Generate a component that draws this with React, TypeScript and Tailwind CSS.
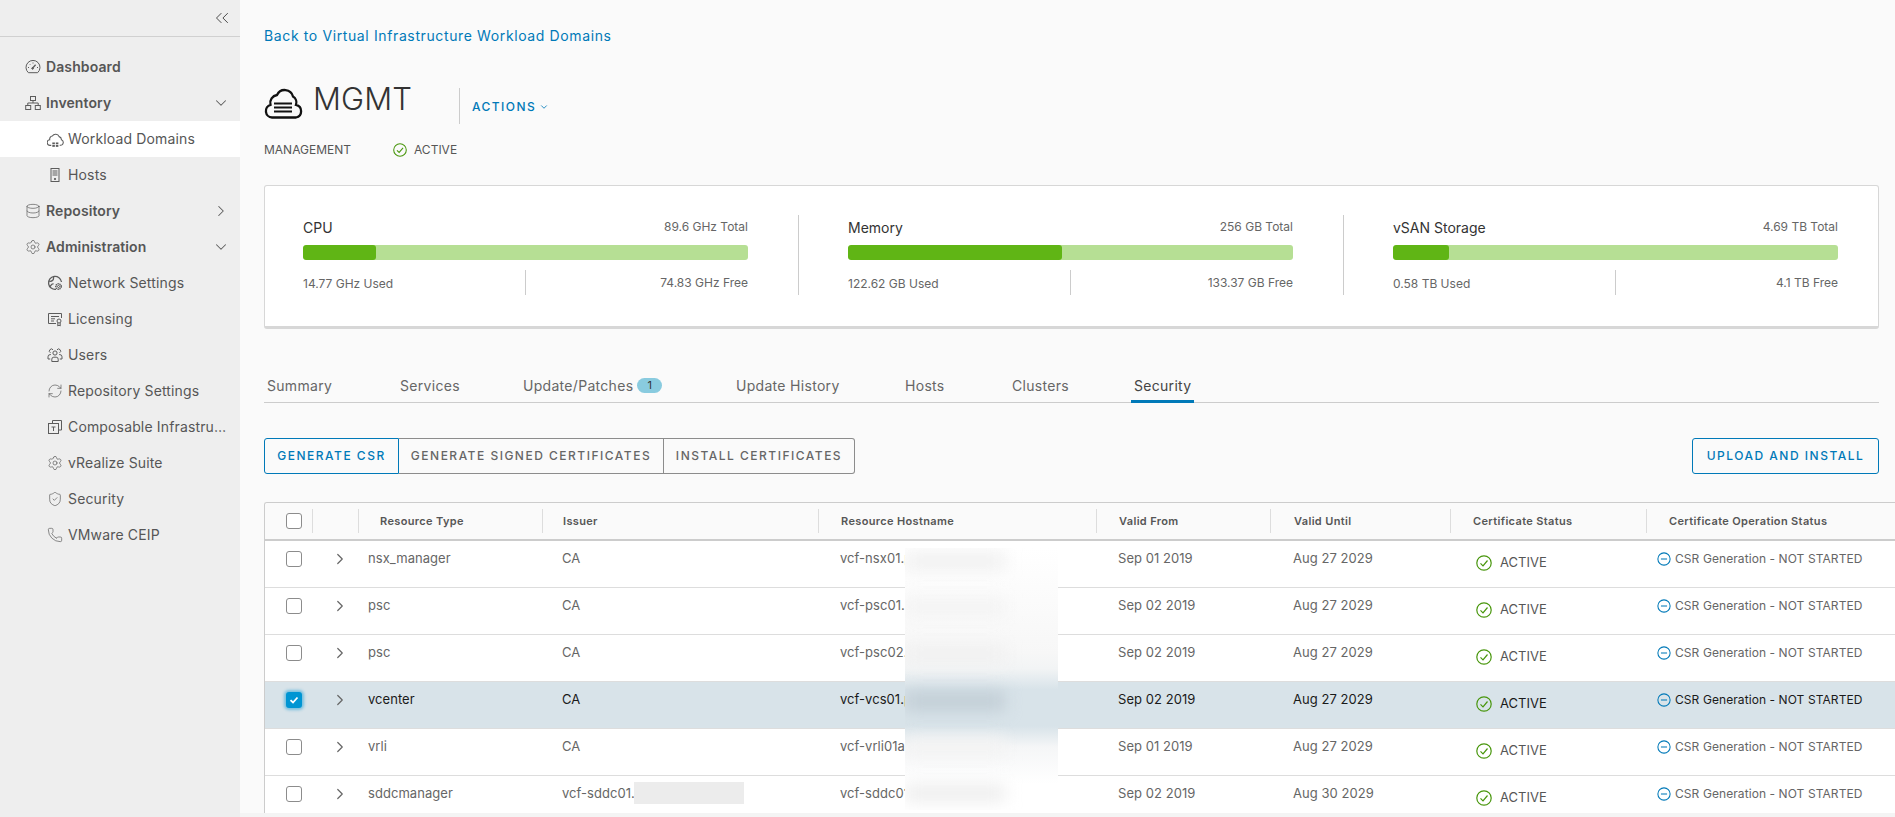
import React from "react";
import { ChevronDown, ChevronRight, ChevronsLeft, Database, Phone, RefreshCw, Settings, ShieldCheck } from "lucide-react";

const INK = "#5c5c5c";
const G = ({ children, cls = "w-[16px] h-[16px]" }: { children: React.ReactNode; cls?: string }) => (
  <svg viewBox="0 0 16 16" fill="none" stroke={INK} strokeWidth="1" className={cls + " shrink-0"}>
    {children}
  </svg>
);

const GaugeIcon = () => (
  <G>
    <path d="M3.400 13.700h9.200a7 7 0 1 0-9.200 0Z" />
    <path d="M3 8.500h1M12 8.500h1M8 3.500v1M4.800 5.200l.6.6" />
    <path d="M7 9.700l3.600-3.900" strokeWidth="1.300" />
    <circle cx="7.600" cy="9.400" r="0.800" fill={INK} />
  </G>
);
const InventoryIcon = () => (
  <G>
    <rect x="5.500" y="1.500" width="5" height="4" />
    <path d="M8 5.500V8M2.800 10.500V8H13.200V10.500" />
    <rect x="0.700" y="10.500" width="5" height="4" />
    <rect x="10.300" y="10.500" width="5" height="4" />
  </G>
);
const CloudIcon = () => (
  <G cls="w-[17px] h-[17px]">
    <path d="M4 13.500H3a2.600 2.600 0 0 1-.4-5.200A2.900 2.900 0 0 1 5 4.700a3.600 3.600 0 0 1 6.400.6 3 3 0 0 1 2.200 3 2.700 2.700 0 0 1-1 5.200H12" />
    <rect x="5" y="10.800" width="2.400" height="1.700" fill={INK} stroke="none" />
    <rect x="8.300" y="10.800" width="2.400" height="1.700" fill={INK} stroke="none" />
    <rect x="5" y="13.200" width="2.400" height="1.700" fill={INK} stroke="none" />
    <rect x="8.300" y="13.200" width="2.400" height="1.700" fill={INK} stroke="none" />
  </G>
);
const HostIcon = () => (
  <G>
    <rect x="4" y="1.500" width="8" height="13" />
    <path d="M5.500 4h5M5.500 6h5M5.500 8h5" />
    <circle cx="8" cy="12" r="0.700" fill={INK} />
  </G>
);
const NetIcon = () => (
  <G>
    <path d="M9 14.300A6.500 6.500 0 1 1 14.500 7" strokeWidth="1.300" />
    <path d="M2 6c2 1 3 0 4-1s0-2.500 1-3.500M3 11.500c1-1 1.500-3 3.500-2.500" strokeWidth="1.300" />
    <circle cx="11.500" cy="11.500" r="2.700" strokeWidth="1.500" strokeDasharray="1.300 .6" />
    <circle cx="11.500" cy="11.500" r="1" />
  </G>
);
const LicenseIcon = () => (
  <G>
    <path d="M9 12.500H1.500V2.500H14.500V7" />
    <path d="M4 5.500H12M4 7.800H8M4 10H7" />
    <circle cx="12" cy="10" r="2" />
    <path d="M10.800 11.800V15L12 14l1.200 1v-3.200" />
  </G>
);
const UsersIcon = () => (
  <G>
    <circle cx="8" cy="6" r="2.100" />
    <path d="M4.800 14.500v-2.300a2 2 0 0 1 2-2h2.400a2 2 0 0 1 2 2v2.300Z" />
    <path d="M6 2.800a2 2 0 1 0-2.500 3M10 2.800a2 2 0 1 1 2.500 3" />
    <path d="M3.200 12H1v-2.200A2.200 2.200 0 0 1 3.200 7.600H4M12.800 12H15V9.800a2.200 2.200 0 0 0-2.200-2.200H12" />
  </G>
);
const ComposeIcon = () => (
  <G>
    <path d="M5.500 4.500V1.500H14.500V11H11.500" />
    <rect x="1.500" y="4.500" width="10" height="10" />
    <path d="M4.500 8h4M6.500 8v4" />
  </G>
);

const Top = ({ icon, label, chev }: { icon: React.ReactNode; label: string; chev?: "d" | "r" }) => (
  <div className="h-9 flex items-center pl-[25px] pr-[10px] gap-[5px]">
    {icon}
    <span className="font-semibold text-[14px] tracking-[0.1px] text-[#565656] flex-1 pb-[1px]">{label}</span>
    {chev === "d" && <ChevronDown size={18} strokeWidth={1.400} color="#5c5c5c" />}
    {chev === "r" && <ChevronRight size={18} strokeWidth={1.400} color="#5c5c5c" />}
  </div>
);
const Sub = ({ icon, label, active }: { icon: React.ReactNode; label: string; active?: boolean }) => (
  <div className={"h-9 flex items-center pl-[47px] gap-[5px] text-[14px] tracking-[0.15px] text-[#565656] " + (active ? "bg-white" : "")}>
    <span className="w-[16px] flex justify-center">{icon}</span>
    <span className="whitespace-nowrap pb-[1px]">{label}</span>
  </div>
);
const L = { size: 16, strokeWidth: 1.050, color: INK, className: "shrink-0" };

const Sidebar = () => (
  <aside className="w-[240px] shrink-0 bg-[#eeeeee] h-[817px]">
    <div className="h-[37px] border-b border-[#d0d0d0] flex items-center justify-end pr-[7px]">
      <ChevronsLeft size={22} strokeWidth={1.050} color="#444" />
    </div>
    <div className="pt-3">
      <Top icon={<GaugeIcon />} label="Dashboard" />
      <Top icon={<InventoryIcon />} label="Inventory" chev="d" />
      <Sub icon={<CloudIcon />} label="Workload Domains" active />
      <Sub icon={<HostIcon />} label="Hosts" />
      <Top icon={<Database {...L} />} label="Repository" chev="r" />
      <Top icon={<Settings {...L} />} label="Administration" chev="d" />
      <Sub icon={<NetIcon />} label="Network Settings" />
      <Sub icon={<LicenseIcon />} label="Licensing" />
      <Sub icon={<UsersIcon />} label="Users" />
      <Sub icon={<RefreshCw {...L} />} label="Repository Settings" />
      <Sub icon={<ComposeIcon />} label="Composable Infrastru…" />
      <Sub icon={<Settings {...L} />} label="vRealize Suite" />
      <Sub icon={<ShieldCheck {...L} />} label="Security" />
      <Sub icon={<Phone {...L} />} label="VMware CEIP" />
    </div>
  </aside>
);

const CheckCircle = ({ cls }: { cls: string }) => (
  <svg viewBox="0 0 16 16" fill="none" className={cls + " shrink-0"} stroke="#48960c" strokeWidth="1.200">
    <circle cx="8" cy="8" r="7.200" />
    <path d="M4.500 8.300l2.500 2.500 4.500-5.300" />
  </svg>
);

const Meter = ({ title, total, used, free, pct }: { title: string; total: string; used: string; free: string; pct: number }) => (
  <div className="flex w-[445px] shrink-0 flex-col">
    <div className="flex items-center justify-between h-[24px]">
      <span className="text-[14px] text-[#333333]">{title}</span>
      <span className="text-[12px] text-[#666666]">{total}</span>
    </div>
    <div className="mt-[6px] h-[15px] rounded-[3px] bg-[#b6df94] overflow-hidden">
      <div className="h-full rounded-[3px] bg-[#60b515]" style={{ width: pct + "%" }} />
    </div>
    <div className="mt-[10px] flex h-[25px] items-center">
      <span className="w-[223px] text-[12px] text-[#666666] h-full flex items-center border-r border-[#cccccc] pt-[2px]">{used}</span>
      <span className="flex-1 text-right text-[12px] text-[#666666]">{free}</span>
    </div>
  </div>
);

const Tab = ({ label, w, active, badge }: { label: string; w: string; active?: boolean; badge?: boolean }) => (
  <div className={"h-[38px] flex text-[14px] tracking-[0.3px] text-[#666666] " + w}>
    <span className={"h-full flex items-center border-b-[3px] px-[3px] pt-[5px] " + (active ? "border-[#0079b8] text-[#444444]" : "border-transparent")}>
      {label}
      {badge && (
        <span className="ml-[4px] w-[25px] h-[15px] tracking-normal rounded-full bg-[#89cbdf] text-[11px] text-[#333333] flex items-center justify-center">1</span>
      )}
    </span>
  </div>
);

const cols = "grid grid-cols-[47px_46px_184px_276px_278px_174px_180px_196px_249px]";
const Head = ({ label, line = true, pl = "pl-[22px]" }: { label?: string; line?: boolean; pl?: string }) => (
  <div className="flex h-full items-center">
    <div className={"h-[24px] flex items-center whitespace-nowrap text-[11px] font-semibold tracking-[0.35px] text-[#565656] " + pl + (line ? " border-l border-[#dddddd]" : "")}>
      {label}
    </div>
  </div>
);
const Box = ({ checked }: { checked?: boolean }) =>
  checked ? (
    <span className="w-4 h-4 rounded-[3px] bg-[#0095d3] shadow-[0_0_3px_2px_rgba(0,149,211,0.45)] flex items-center justify-center">
      <svg viewBox="0 0 12 12" className="w-3 h-3" fill="none" stroke="white" strokeWidth="1.800">
        <path d="M2.500 6.200l2.500 2.300 4.500-5" />
      </svg>
    </span>
  ) : (
    <span className="w-4 h-4 rounded-[3px] border border-[#8c8c8c] bg-white" />
  );

const rows: [string, string, string, string, string, boolean?][] = [
  ["nsx_manager", "CA", "vcf-nsx01.p", "Sep 01 2019", "Aug 27 2029"],
  ["psc", "CA", "vcf-psc01.p", "Sep 02 2019", "Aug 27 2029"],
  ["psc", "CA", "vcf-psc02.", "Sep 02 2019", "Aug 27 2029"],
  ["vcenter", "CA", "vcf-vcs01.p", "Sep 02 2019", "Aug 27 2029", true],
  ["vrli", "CA", "vcf-vrli01a.", "Sep 01 2019", "Aug 27 2029"],
  ["sddcmanager", "vcf-sddc01.", "vcf-sddc01", "Sep 02 2019", "Aug 30 2029"],
];

const Row = ({ r, i }: { r: (typeof rows)[number]; i: number }) => {
  const sel = r[5];
  return (
    <div className={cols + " h-[47px] border-b border-[#dddddd] text-[13px] tracking-[0.05px] " + (sel ? "bg-[#d8e3e9] text-[#1a1a1a]" : "bg-white text-[#666666]")}>
      <div className="pl-[21px] flex items-center h-[36px]"><Box checked={sel} /></div>
      <div className="pl-[19px] flex items-center h-[36px]"><ChevronRight size={18} strokeWidth={1.600} color="#666" /></div>
      <div className="pl-[10px] h-[36px] flex items-center">{r[0]}</div>
      <div className="pl-[20px] h-[36px] flex items-center relative">
        {r[1]}
        {i === 5 && <span className="absolute left-[92px] top-[6px] w-[110px] h-[22px] bg-[#ececec]" />}
      </div>
      <div className="pl-[22px] h-[36px] flex items-center">{r[2]}</div>
      <div className="pl-[22px] h-[36px] flex items-center">{r[3]}</div>
      <div className="pl-[23px] h-[36px] flex items-center">{r[4]}</div>
      <div className="pl-[26px] pt-[8px] h-[36px] flex items-center gap-[8px] text-[#565656]">
        <CheckCircle cls="w-[16px] h-[16px]" />
        <span className={sel ? "text-[#1a1a1a]" : ""}>ACTIVE</span>
      </div>
      <div className="pl-[11px] h-[36px] flex items-center gap-[4px] whitespace-nowrap text-[12px] tracking-[0.08px]">
        <svg viewBox="0 0 16 16" className="w-[14px] h-[14px] shrink-0" fill="none" stroke="#0079b8" strokeWidth="1.200">
          <circle cx="8" cy="8" r="7" />
          <path d="M4.500 8h7" />
        </svg>
        CSR Generation - NOT STARTED
      </div>
    </div>
  );
};

export default function App() {
  return (
    <div className="relative flex w-full h-[817px] overflow-hidden bg-[#fafafa] font-['Inter','Liberation_Sans',sans-serif]">
      <Sidebar />
      <main className="flex-1 min-w-0 pl-6 pr-4">
        <a className="block pt-[26px] h-[56px] text-[14px] tracking-[0.62px] leading-[20px] text-[#0079b8]">Back to Virtual Infrastructure Workload Domains</a>
        <div className="mt-[32px] h-[36px] flex items-center">
          <svg viewBox="0 0 40 34" fill="none" stroke="#111" strokeWidth="2.300" className="w-[40px] h-[34px] shrink-0 mb-[9px]">
            <path d="M8 32.500a6.500 6.500 0 0 1-1.500-12.700A8 8 0 0 1 13 10a8.500 8.500 0 0 1 16 1.500 7 7 0 0 1 3 8.300 6.500 6.500 0 0 1 0 12.700Z" />
            <path d="M10 18.500H28M10 22.500H28M10 26.500H28" strokeWidth="2" />
          </svg>
          <span className="ml-[9px] text-[31px] font-light tracking-[0.1px] text-[#333333] w-[146px] pb-[14px] leading-[36px]">MGMT</span>
          <span className="h-[36px] border-l border-[#cccccc]" />
          <span className="ml-[12px] pt-[1px] flex items-center gap-[3px] text-[12px] font-medium tracking-[1.450px] text-[#0079b8]">
            ACTIONS
            <ChevronDown size={10} strokeWidth={2} />
          </span>
        </div>
        <div className="mt-[16px] h-[20px] flex items-center text-[12px] text-[#565656]">
          <span className="w-[129px]">MANAGEMENT</span>
          <CheckCircle cls="w-[14px] h-[14px]" />
          <span className="ml-[7px]">ACTIVE</span>
        </div>

        <section className="mt-[25px] h-[144px] rounded-[3px] border border-[#d7d7d7] border-b-[3px] bg-white flex pl-[38px] pt-[29px]">
          <Meter title="CPU" total="89.6 GHz Total" used="14.77 GHz Used" free="74.83 GHz Free" pct={16.400} />
          <div className="w-[100px] flex justify-center"><span className="h-[80px] border-l border-[#cccccc]" /></div>
          <Meter title="Memory" total="256 GB Total" used="122.62 GB Used" free="133.37 GB Free" pct={48} />
          <div className="w-[100px] flex justify-center"><span className="h-[80px] border-l border-[#cccccc]" /></div>
          <Meter title="vSAN Storage" total="4.69 TB Total" used="0.58 TB Used" free="4.1 TB Free" pct={12.500} />
        </section>

        <nav className="mt-[36px] flex h-[38px] border-b border-[#cccccc]">
          <Tab label="Summary" w="w-[133px]" />
          <Tab label="Services" w="w-[123px]" />
          <Tab label="Update/Patches" w="w-[213px]" badge />
          <Tab label="Update History" w="w-[169px]" />
          <Tab label="Hosts" w="w-[107px]" />
          <Tab label="Clusters" w="w-[122px]" />
          <Tab label="Security" w="w-[80px]" active />
        </nav>

        <div className="mt-[35px] flex items-center justify-between">
          <div className="flex h-[36px] text-[12px] font-medium tracking-[1.500px]">
            <span className="w-[135px] flex items-center justify-center rounded-l-[3px] border border-[#0079b8] text-[#0079b8]">GENERATE CSR</span>
            <span className="w-[265px] flex items-center justify-center border-y border-r border-[#8c8c8c] text-[#666666]">GENERATE SIGNED CERTIFICATES</span>
            <span className="w-[191px] flex items-center justify-center rounded-r-[3px] border-y border-r border-[#8c8c8c] text-[#666666]">INSTALL CERTIFICATES</span>
          </div>
          <span className="w-[187px] h-[36px] flex items-center justify-center rounded-[3px] border border-[#0079b8] text-[12px] font-medium tracking-[1.500px] text-[#0079b8]">UPLOAD AND INSTALL</span>
        </div>

        <div className="mt-[28px] -mr-4 border-l border-t border-[#cccccc] rounded-tl-[3px] overflow-hidden">
          <div className={cols + " h-[38px] bg-[#fafafa] border-b-2 border-[#cccccc]"}>
            <div className="pl-[21px] flex items-center"><Box /></div>
            <Head />
            <Head label="Resource Type" pl="pl-[21px]" />
            <Head label="Issuer" pl="pl-[20px]" />
            <Head label="Resource Hostname" />
            <Head label="Valid From" />
            <Head label="Valid Until" pl="pl-[23px]" />
            <Head label="Certificate Status" />
            <Head label="Certificate Operation Status" />
          </div>
          {rows.map((r, i) => (
            <Row key={i} r={r} i={i} />
          ))}
        </div>
      </main>
      <div className="absolute left-[905px] top-[548px] w-[153px] h-[262px] overflow-hidden bg-[linear-gradient(to_bottom,#ffffff_0%,#f7f7f7_40%,#f2f4f5_46%,#d8e3e9_54%,#d8e3e9_68%,#f5f6f7_76%,#ffffff_90%)]">
        <div className="absolute left-0 top-[4px] w-[100px] h-[18px] bg-[#f0f0f0] blur-[8px]" />
        <div className="absolute left-0 top-[50px] w-[100px] h-[18px] bg-[#f3f3f3] blur-[8px]" />
        <div className="absolute left-0 top-[97px] w-[100px] h-[18px] bg-[#f0f0f0] blur-[8px]" />
        <div className="absolute left-0 top-[143px] w-[100px] h-[20px] bg-[#c2ced6] blur-[8px]" />
        <div className="absolute left-0 top-[190px] w-[100px] h-[18px] bg-[#f3f3f3] blur-[8px]" />
        <div className="absolute left-0 top-[236px] w-[100px] h-[18px] bg-[#eeeeee] blur-[8px]" />
      </div>
      <div className="absolute left-[240px] right-0 bottom-0 h-[4px] bg-[#f4f4f4]" />
    </div>
  );
}
